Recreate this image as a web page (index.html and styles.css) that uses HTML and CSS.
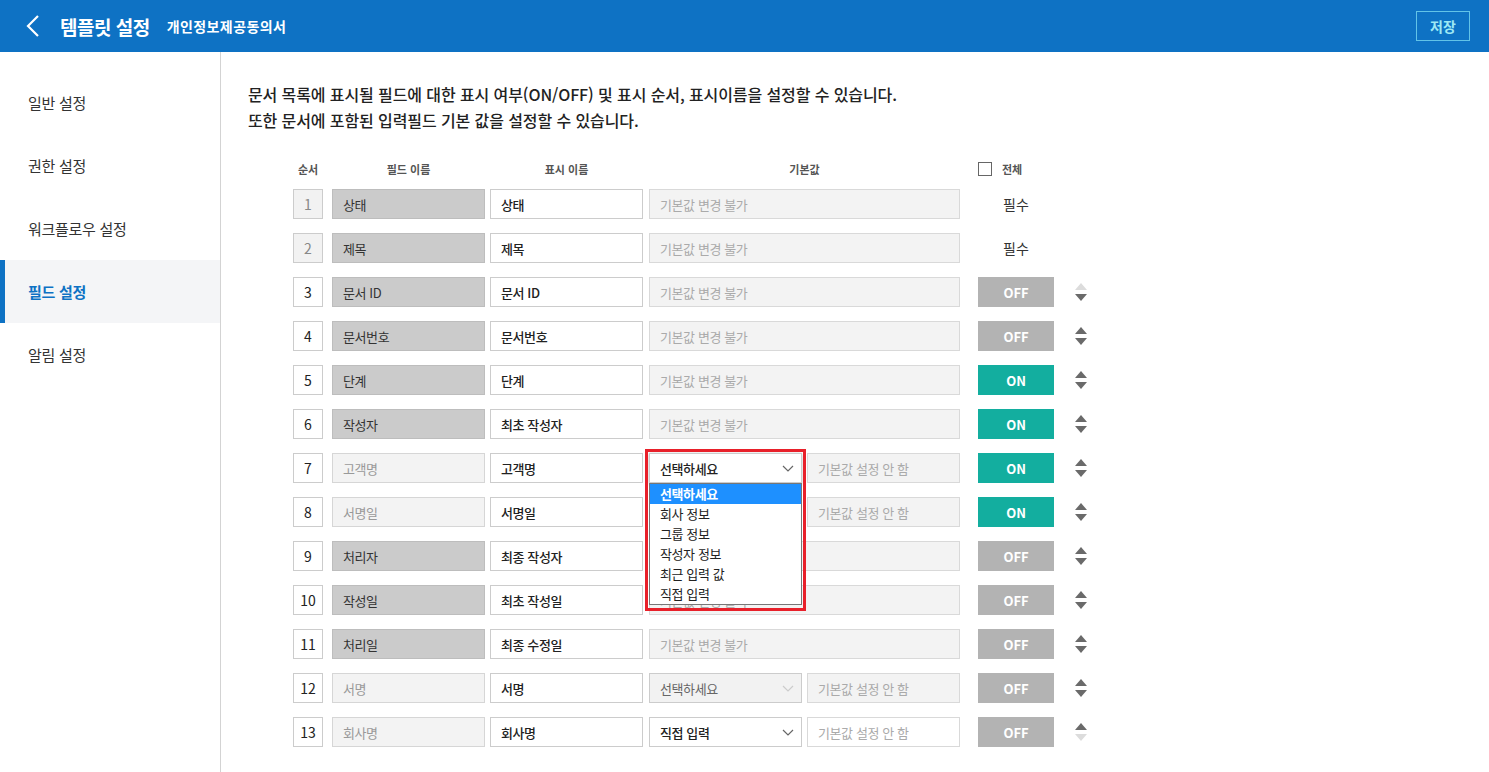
FILE: index.html
```html
<!DOCTYPE html>
<html lang="ko">
<head>
<meta charset="utf-8">
<title>템플릿 설정</title>
<link rel="stylesheet" href="styles.css">
</head>
<body>
<header class="topbar">
  <button class="back" aria-label="뒤로">
    <svg width="14" height="22" viewBox="0 0 14 22"><path d="M12 1 L2 11 L12 21" fill="none" stroke="#fff" stroke-width="2.2"/></svg>
  </button>
  <h1 class="title">템플릿 설정</h1>
  <span class="subtitle">개인정보제공동의서</span>
  <button class="save">저장</button>
</header>
<div class="layout">
  <nav class="sidebar">
    <a class="nav-item">일반 설정</a>
    <a class="nav-item">권한 설정</a>
    <a class="nav-item">워크플로우 설정</a>
    <a class="nav-item active">필드 설정</a>
    <a class="nav-item">알림 설정</a>
  </nav>
  <main class="content">
    <p class="desc">문서 목록에 표시될 필드에 대한 표시 여부(ON/OFF) 및 표시 순서, 표시이름을 설정할 수 있습니다.<br>또한 문서에 포함된 입력필드 기본 값을 설정할 수 있습니다.</p>
    <div class="fields">
      <div class="row head">
        <div class="h num">순서</div>
        <div class="h fname">필드 이름</div>
        <div class="h dname">표시 이름</div>
        <div class="h dflt">기본값</div>
        <div class="h all"><span class="chk"></span>전체</div>
      </div>

      <div class="row">
        <div class="cell num fixed">1</div>
        <div class="cell fname">상태</div>
        <div class="cell dname">상태</div>
        <div class="cell dflt">기본값 변경 불가</div>
        <div class="req">필수</div>
      </div>
      <div class="row">
        <div class="cell num fixed">2</div>
        <div class="cell fname">제목</div>
        <div class="cell dname">제목</div>
        <div class="cell dflt">기본값 변경 불가</div>
        <div class="req">필수</div>
      </div>
      <div class="row">
        <div class="cell num">3</div>
        <div class="cell fname">문서 ID</div>
        <div class="cell dname">문서 ID</div>
        <div class="cell dflt">기본값 변경 불가</div>
        <div class="toggle off">OFF</div>
        <div class="order"><svg width="12" height="18" viewBox="0 0 12 18"><polygon class="dis" points="0,7 6,0 12,7"/><polygon points="0,11 12,11 6,18"/></svg></div>
      </div>
      <div class="row">
        <div class="cell num">4</div>
        <div class="cell fname">문서번호</div>
        <div class="cell dname">문서번호</div>
        <div class="cell dflt">기본값 변경 불가</div>
        <div class="toggle off">OFF</div>
        <div class="order"><svg width="12" height="18" viewBox="0 0 12 18"><polygon points="0,7 6,0 12,7"/><polygon points="0,11 12,11 6,18"/></svg></div>
      </div>
      <div class="row">
        <div class="cell num">5</div>
        <div class="cell fname">단계</div>
        <div class="cell dname">단계</div>
        <div class="cell dflt">기본값 변경 불가</div>
        <div class="toggle on">ON</div>
        <div class="order"><svg width="12" height="18" viewBox="0 0 12 18"><polygon points="0,7 6,0 12,7"/><polygon points="0,11 12,11 6,18"/></svg></div>
      </div>
      <div class="row">
        <div class="cell num">6</div>
        <div class="cell fname">작성자</div>
        <div class="cell dname">최초 작성자</div>
        <div class="cell dflt">기본값 변경 불가</div>
        <div class="toggle on">ON</div>
        <div class="order"><svg width="12" height="18" viewBox="0 0 12 18"><polygon points="0,7 6,0 12,7"/><polygon points="0,11 12,11 6,18"/></svg></div>
      </div>
      <div class="row">
        <div class="cell num">7</div>
        <div class="cell fname input-field">고객명</div>
        <div class="cell dname">고객명</div>
        <div class="cell select focus">선택하세요<svg class="chev" width="12" height="7" viewBox="0 0 12 7"><path d="M1 1 L6 6 L11 1" fill="none" stroke="#666" stroke-width="1.2"/></svg>
          <div class="highlight"></div>
          <ul class="options">
            <li class="sel">선택하세요</li>
            <li>회사 정보</li>
            <li>그룹 정보</li>
            <li>작성자 정보</li>
            <li>최근 입력 값</li>
            <li>직접 입력</li>
          </ul>
        </div>
        <div class="cell value">기본값 설정 안 함</div>
        <div class="toggle on">ON</div>
        <div class="order"><svg width="12" height="18" viewBox="0 0 12 18"><polygon points="0,7 6,0 12,7"/><polygon points="0,11 12,11 6,18"/></svg></div>
      </div>
      <div class="row">
        <div class="cell num">8</div>
        <div class="cell fname input-field">서명일</div>
        <div class="cell dname">서명일</div>
        <div class="cell select covered"></div>
        <div class="cell value">기본값 설정 안 함</div>
        <div class="toggle on">ON</div>
        <div class="order"><svg width="12" height="18" viewBox="0 0 12 18"><polygon points="0,7 6,0 12,7"/><polygon points="0,11 12,11 6,18"/></svg></div>
      </div>
      <div class="row">
        <div class="cell num">9</div>
        <div class="cell fname">처리자</div>
        <div class="cell dname">최종 작성자</div>
        <div class="cell dflt"><span class="right-part">기본값 변경 불가</span></div>
        <div class="toggle off">OFF</div>
        <div class="order"><svg width="12" height="18" viewBox="0 0 12 18"><polygon points="0,7 6,0 12,7"/><polygon points="0,11 12,11 6,18"/></svg></div>
      </div>
      <div class="row">
        <div class="cell num">10</div>
        <div class="cell fname">작성일</div>
        <div class="cell dname">최초 작성일</div>
        <div class="cell dflt">기본값 변경 불가</div>
        <div class="toggle off">OFF</div>
        <div class="order"><svg width="12" height="18" viewBox="0 0 12 18"><polygon points="0,7 6,0 12,7"/><polygon points="0,11 12,11 6,18"/></svg></div>
      </div>
      <div class="row">
        <div class="cell num">11</div>
        <div class="cell fname">처리일</div>
        <div class="cell dname">최종 수정일</div>
        <div class="cell dflt">기본값 변경 불가</div>
        <div class="toggle off">OFF</div>
        <div class="order"><svg width="12" height="18" viewBox="0 0 12 18"><polygon points="0,7 6,0 12,7"/><polygon points="0,11 12,11 6,18"/></svg></div>
      </div>
      <div class="row">
        <div class="cell num">12</div>
        <div class="cell fname input-field">서명</div>
        <div class="cell dname">서명</div>
        <div class="cell select disabled">선택하세요<svg class="chev" width="12" height="7" viewBox="0 0 12 7"><path d="M1 1 L6 6 L11 1" fill="none" stroke="#ccc" stroke-width="1.2"/></svg></div>
        <div class="cell value">기본값 설정 안 함</div>
        <div class="toggle off">OFF</div>
        <div class="order"><svg width="12" height="18" viewBox="0 0 12 18"><polygon points="0,7 6,0 12,7"/><polygon points="0,11 12,11 6,18"/></svg></div>
      </div>
      <div class="row">
        <div class="cell num">13</div>
        <div class="cell fname input-field">회사명</div>
        <div class="cell dname">회사명</div>
        <div class="cell select">직접 입력<svg class="chev" width="12" height="7" viewBox="0 0 12 7"><path d="M1 1 L6 6 L11 1" fill="none" stroke="#666" stroke-width="1.2"/></svg></div>
        <div class="cell value editable">기본값 설정 안 함</div>
        <div class="toggle off">OFF</div>
        <div class="order"><svg width="12" height="18" viewBox="0 0 12 18"><polygon points="0,7 6,0 12,7"/><polygon class="dis" points="0,11 12,11 6,18"/></svg></div>
      </div>
    </div>
  </main>
</div>
</body>
</html>
```
FILE: styles.css
```css
* { box-sizing: border-box; }
html, body { height: 100%; }
body {
  margin: 0;
  font-family: "Noto Sans CJK KR", "Noto Sans", sans-serif;
  color: #222;
  background: #fff;
  overflow: hidden;
}

/* top bar */
.topbar {
  height: 52px;
  background: #0e72c4;
  display: flex;
  align-items: center;
  padding: 0 19px 0 26px;
  color: #fff;
}
.back {
  width: 14px;
  height: 22px;
  padding: 0;
  border: 0;
  background: none;
  display: flex;
  margin-right: 20px;
}
.title {
  margin: 0;
  font-size: 19px;
  font-weight: 700;
  letter-spacing: -0.5px;
}
.subtitle {
  margin-left: 17px;
  font-size: 14px;
  font-weight: 700;
  letter-spacing: 0.4px;
}
.save {
  margin-left: auto;
  width: 54px;
  height: 30px;
  border: 1px solid #62c3e8;
  background: transparent;
  color: #9ee9f4;
  font-family: inherit;
  font-size: 14px;
  font-weight: 700;
  padding: 0;
}

/* layout */
.layout {
  display: flex;
  height: calc(100% - 52px);
}
.sidebar {
  width: 221px;
  flex: none;
  border-right: 1px solid #d3d3d3;
  padding-top: 19px;
  display: flex;
  flex-direction: column;
}
.nav-item {
  height: 63px;
  display: flex;
  align-items: center;
  padding-left: 28px;
  font-size: 15px;
  color: #333;
  letter-spacing: -0.3px;
}
.nav-item.active {
  background: #f4f5f7;
  border-left: 5px solid #0e72c4;
  padding-left: 23px;
  color: #0e72c4;
  font-weight: 700;
}

.content {
  flex: 1;
  padding: 29px 0 0 27px;
}
.desc {
  margin: 0;
  font-size: 16px;
  line-height: 26px;
  font-weight: 500;
  color: #222;
  letter-spacing: -0.1px;
}

/* field table */
.fields {
  margin: 26px 0 0 45px;
  display: flex;
  flex-direction: column;
  gap: 14px;
}
.row {
  display: flex;
  align-items: center;
  height: 30px;
  gap: 5px;
}
.row.head {
  height: 20px;
  margin-bottom: -4px;
}
.h {
  font-size: 11px;
  font-weight: 700;
  color: #555;
  text-align: center;
}
.num { width: 30px; flex: none; }
.fname { width: 153px; flex: none; margin-left: 4px; }
.dname { width: 153px; flex: none; }
.dflt { width: 311px; flex: none; margin-left: 1px; }
.select { width: 153px; flex: none; margin-left: 1px; }
.value { width: 153px; flex: none; }
.all {
  margin-left: 13px;
  display: flex;
  align-items: center;
  gap: 10px;
}
.chk {
  width: 14px;
  height: 14px;
  border: 1px solid #666;
  background: #fff;
}

.cell {
  height: 30px;
  border: 1px solid #ccc;
  display: flex;
  align-items: center;
  padding-left: 10px;
  font-size: 13px;
  letter-spacing: -0.4px;
  color: #222;
  background: #fff;
  overflow: hidden;
}
.cell.num {
  justify-content: center;
  padding: 0;
  font-size: 14px;
  letter-spacing: 0;
}
.cell.num.fixed {
  background: #f2f2f2;
  color: #888;
}
.cell.fname {
  background: #cbcbcb;
  border-color: #bdbdbd;
  color: #333;
}
.cell.fname.input-field {
  background: #f3f3f3;
  border-color: #d6d6d6;
  color: #999;
}
.cell.dname {
  font-weight: 500;
}
.cell.dflt,
.cell.value {
  background: #f3f3f3;
  border-color: #d9d9d9;
  color: #aaa;
}
.cell.value.editable {
  background: #fff;
}
.cell.select {
  position: relative;
  justify-content: space-between;
  padding-right: 7px;
  font-weight: 500;
  overflow: visible;
}
.cell.select.focus {
  box-shadow: 0 1px 4px rgba(0,0,0,0.25);
}
.cell.select.disabled {
  background: #f2f2f2;
  color: #666;
  font-weight: 400;
}
.right-part {
  visibility: hidden;
}
.chev { flex: none; }

.req {
  margin-left: 13px;
  width: 76px;
  text-align: center;
  font-size: 14px;
  color: #333;
}
.toggle {
  margin-left: 13px;
  width: 76px;
  height: 30px;
  flex: none;
  display: flex;
  align-items: center;
  justify-content: center;
  font-size: 13px;
  font-weight: 700;
  color: #fff;
}
.toggle.off { background: #b3b3b3; }
.toggle.on { background: #13ae9f; }
.order {
  margin-left: 16px;
  width: 12px;
  height: 18px;
  display: flex;
}
.order polygon { fill: #6a6a6a; }
.order polygon.dis { fill: #dcdcdc; }

/* open dropdown */
.highlight {
  position: absolute;
  left: -5px;
  top: -5px;
  width: 161px;
  height: 162px;
  border: 3px solid #e8202a;
  pointer-events: none;
  z-index: 3;
}
.options {
  position: absolute;
  left: -1px;
  top: 29px;
  width: 153px;
  margin: 0;
  padding: 0;
  list-style: none;
  background: #fff;
  border: 1px solid #777;
  z-index: 2;
}
.options li {
  height: 20px;
  line-height: 20px;
  padding-left: 10px;
  font-size: 13px;
  font-weight: 400;
  color: #222;
}
.options li.sel {
  background: #1e90ff;
  color: #fff;
  font-weight: 700;
}
```
